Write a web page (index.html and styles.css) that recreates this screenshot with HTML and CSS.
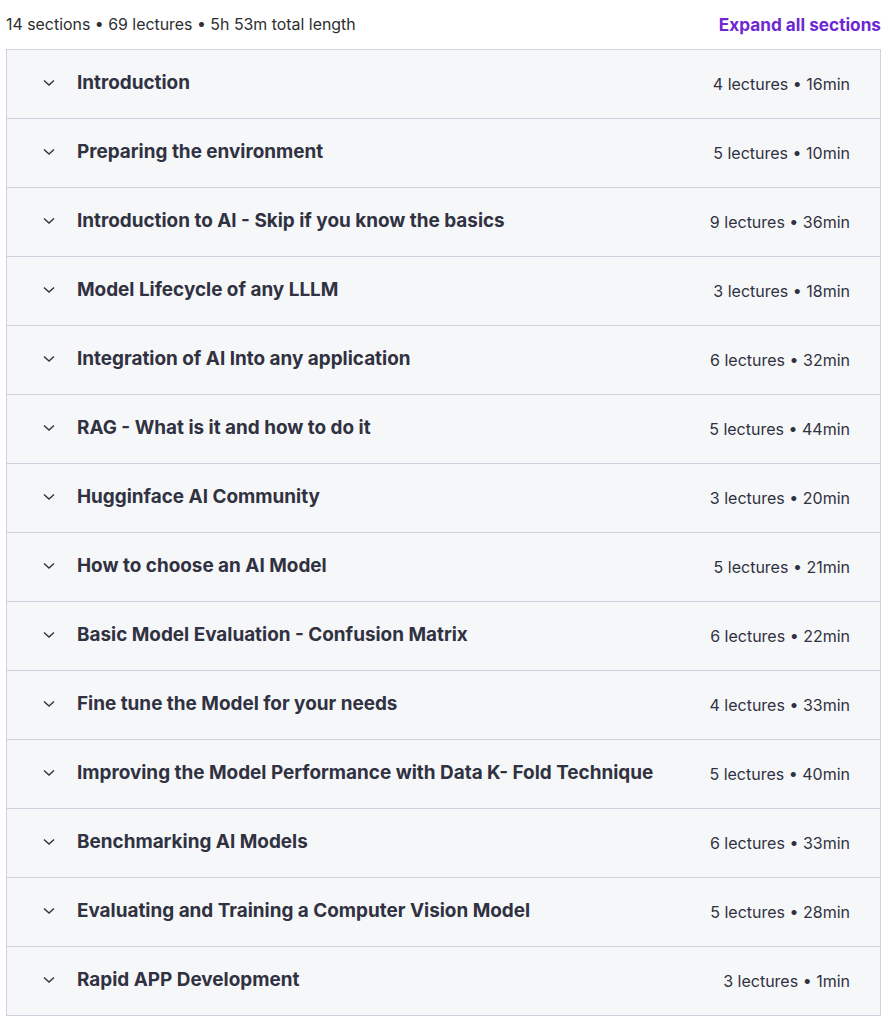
FILE: index.html
```html
<!DOCTYPE html>
<html lang="en">
<head>
<meta charset="utf-8">
<title>Course content</title>
<link rel="stylesheet" href="styles.css">
</head>
<body>
<div class="wrap">
  <div class="summary">
    <span class="summary-text">14 sections • 69 lectures • 5h 53m total length</span>
    <button class="expand">Expand all sections</button>
  </div>
  <div class="sections">
    <div class="row"><span class="chev"><svg viewBox="0 0 12 8" width="12" height="8"><path d="M1 1.5 L6 6 L11 1.5" /></svg></span><span class="title">Introduction</span><span class="meta">4 lectures • 16min</span></div>
    <div class="row"><span class="chev"><svg viewBox="0 0 12 8" width="12" height="8"><path d="M1 1.5 L6 6 L11 1.5" /></svg></span><span class="title">Preparing the environment</span><span class="meta">5 lectures • 10min</span></div>
    <div class="row"><span class="chev"><svg viewBox="0 0 12 8" width="12" height="8"><path d="M1 1.5 L6 6 L11 1.5" /></svg></span><span class="title">Introduction to AI - Skip if you know the basics</span><span class="meta">9 lectures • 36min</span></div>
    <div class="row"><span class="chev"><svg viewBox="0 0 12 8" width="12" height="8"><path d="M1 1.5 L6 6 L11 1.5" /></svg></span><span class="title">Model Lifecycle of any LLLM</span><span class="meta">3 lectures • 18min</span></div>
    <div class="row"><span class="chev"><svg viewBox="0 0 12 8" width="12" height="8"><path d="M1 1.5 L6 6 L11 1.5" /></svg></span><span class="title">Integration of AI Into any application</span><span class="meta">6 lectures • 32min</span></div>
    <div class="row"><span class="chev"><svg viewBox="0 0 12 8" width="12" height="8"><path d="M1 1.5 L6 6 L11 1.5" /></svg></span><span class="title">RAG - What is it and how to do it</span><span class="meta">5 lectures • 44min</span></div>
    <div class="row"><span class="chev"><svg viewBox="0 0 12 8" width="12" height="8"><path d="M1 1.5 L6 6 L11 1.5" /></svg></span><span class="title">Hugginface AI Community</span><span class="meta">3 lectures • 20min</span></div>
    <div class="row"><span class="chev"><svg viewBox="0 0 12 8" width="12" height="8"><path d="M1 1.5 L6 6 L11 1.5" /></svg></span><span class="title">How to choose an AI Model</span><span class="meta">5 lectures • 21min</span></div>
    <div class="row"><span class="chev"><svg viewBox="0 0 12 8" width="12" height="8"><path d="M1 1.5 L6 6 L11 1.5" /></svg></span><span class="title">Basic Model Evaluation - Confusion Matrix</span><span class="meta">6 lectures • 22min</span></div>
    <div class="row"><span class="chev"><svg viewBox="0 0 12 8" width="12" height="8"><path d="M1 1.5 L6 6 L11 1.5" /></svg></span><span class="title">Fine tune the Model for your needs</span><span class="meta">4 lectures • 33min</span></div>
    <div class="row"><span class="chev"><svg viewBox="0 0 12 8" width="12" height="8"><path d="M1 1.5 L6 6 L11 1.5" /></svg></span><span class="title">Improving the Model Performance with Data K- Fold Technique</span><span class="meta">5 lectures • 40min</span></div>
    <div class="row"><span class="chev"><svg viewBox="0 0 12 8" width="12" height="8"><path d="M1 1.5 L6 6 L11 1.5" /></svg></span><span class="title">Benchmarking AI Models</span><span class="meta">6 lectures • 33min</span></div>
    <div class="row"><span class="chev"><svg viewBox="0 0 12 8" width="12" height="8"><path d="M1 1.5 L6 6 L11 1.5" /></svg></span><span class="title">Evaluating and Training a Computer Vision Model</span><span class="meta">5 lectures • 28min</span></div>
    <div class="row"><span class="chev"><svg viewBox="0 0 12 8" width="12" height="8"><path d="M1 1.5 L6 6 L11 1.5" /></svg></span><span class="title">Rapid APP Development</span><span class="meta">3 lectures • 1min</span></div>
  </div>
</div>
</body>
</html>
```

FILE: styles.css
```css
html, body {
  margin: 0;
  padding: 0;
  background: #ffffff;
}
body {
  font-family: Inter, "Noto Sans", sans-serif;
  color: #2d2f31;
}
.wrap {
  margin-left: 6px;
  width: 875px;
}
.summary {
  height: 49px;
  display: flex;
  align-items: center;
  justify-content: space-between;
  box-sizing: border-box;
  padding-bottom: 1px;
}
.summary-text {
  font-size: 15.9px;
  color: #2d2f31;
}
.expand {
  border: none;
  background: none;
  padding: 0;
  font-family: inherit;
  font-size: 17.2px;
  font-weight: 700;
  color: #6d28d2;
  cursor: pointer;
}
.sections {
  border: 1px solid #d1d2e0;
  border-bottom: none;
}
.row {
  height: 68px;
  border-bottom: 1px solid #d1d2e0;
  background: #f6f7f9;
  display: flex;
  align-items: center;
  padding: 0 30px 0 36px;
  box-sizing: content-box;
}
.chev {
  width: 34px;
  display: flex;
  align-items: center;
  margin-top: -2px;
}
.chev svg {
  fill: none;
  stroke: #303141;
  stroke-width: 1.4;
}
.title {
  flex: 1;
  font-size: 18.9px;
  font-weight: 700;
  color: #303141;
  margin-top: -4px;
}
.meta {
  font-size: 16px;
  color: #303141;
}
```
